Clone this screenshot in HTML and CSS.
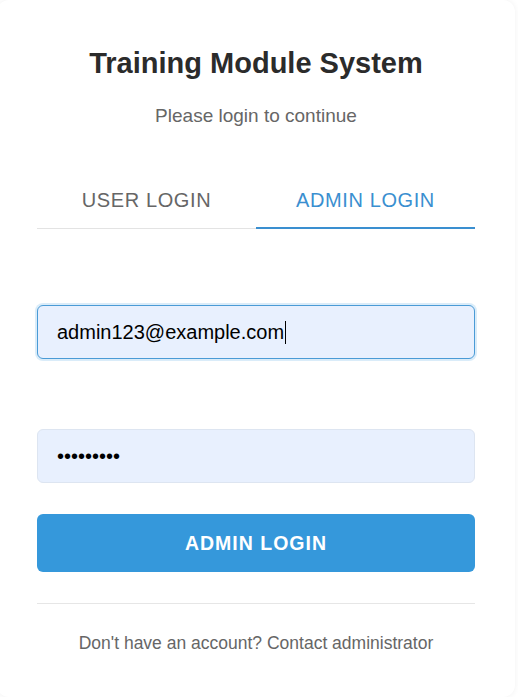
FILE: index.html
```html
<!DOCTYPE html>
<html lang="en">
<head>
<meta charset="utf-8">
<title>Training Module System</title>
<link rel="stylesheet" href="styles.css">
</head>
<body>
<div class="card">
  <h1 class="title">Training Module System</h1>
  <p class="subtitle">Please login to continue</p>
  <div class="tabs">
    <div class="tab">USER LOGIN</div>
    <div class="tab active">ADMIN LOGIN</div>
  </div>
  <form class="form">
    <div class="field">
      <div class="input focused">admin123@example.com<span class="caret"></span></div>
    </div>
    <div class="field">
      <div class="input">•••••••••</div>
    </div>
    <button type="button" class="btn">ADMIN LOGIN</button>
  </form>
  <div class="footer">Don't have an account? Contact administrator</div>
</div>
</body>
</html>
```
FILE: styles.css
```css
html, body {
  margin: 0;
  padding: 0;
  background: #ffffff;
  overflow: hidden;
}
body {
  font-family: "Liberation Sans", Arial, sans-serif;
  height: 697px;
}
.card {
  box-sizing: border-box;
  width: 518px;
  height: 697px;
  margin-left: -3px;
  padding: 45px 40px 0;
  background: #fff;
  border-radius: 12px;
  box-shadow: 0 0 6px rgba(0, 0, 0, 0.06);
}
.title {
  margin: 0;
  text-align: center;
  font-size: 29px;
  font-weight: bold;
  color: #2b2b2b;
  line-height: 36px;
}
.subtitle {
  margin: 24px 0 0;
  text-align: center;
  font-size: 19px;
  color: #666;
  line-height: 22px;
}
.tabs {
  display: flex;
  margin-top: 61px;
  border-bottom: 1px solid #e3e3e3;
}
.tab {
  flex: 1;
  text-align: center;
  font-size: 20px;
  letter-spacing: 0.6px;
  color: #666;
  padding: 0 0 15px;
  line-height: 24px;
}
.tab.active {
  color: #3a8fd0;
  border-bottom: 2px solid #3a8fd0;
  margin-bottom: -1px;
}
.form {
  display: flex;
  flex-direction: column;
}
.field {
  margin-top: 76px;
}
.field + .field {
  margin-top: 70px;
}
.input {
  box-sizing: border-box;
  height: 54px;
  padding: 0 19px;
  display: flex;
  align-items: center;
  font-size: 20px;
  color: #000;
  background: #e8f0fe;
  border: 1px solid #dde5f1;
  border-radius: 6px;
}
.input.focused {
  border-color: #4a9bd6;
  box-shadow: 0 0 0 2px rgba(52, 152, 219, 0.18);
}
.caret {
  display: inline-block;
  width: 1px;
  height: 23px;
  background: #000;
  margin-left: 1px;
}
.btn {
  margin-top: 31px;
  height: 58px;
  border: none;
  border-radius: 6px;
  background: #3598db;
  color: #fff;
  font-family: "Liberation Sans", Arial, sans-serif;
  font-weight: bold;
  font-size: 19.5px;
  letter-spacing: 1px;
}
.footer {
  margin-top: 31px;
  border-top: 1px solid #e6e6e6;
  padding-top: 29px;
  text-align: center;
  font-size: 17.5px;
  color: #666;
}
```
